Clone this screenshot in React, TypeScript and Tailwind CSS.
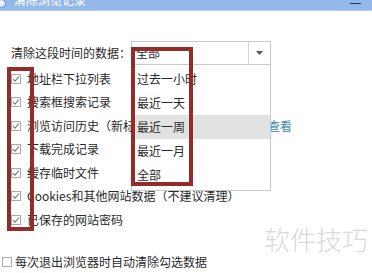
import React from 'react'

const items = [
    '地址栏下拉列表',
    '搜索框搜索记录',
    '浏览访问历史（新标签页）',
    '下载完成记录',
    '缓存临时文件',
    'Cookies和其他网站数据（不建议清理）',
    '已保存的网站密码',
]

const ranges = ['过去一小时', '最近一天', '最近一周', '最近一月', '全部']

function Box({ checked }: { checked: boolean }) {
    return (
        <span className="flex h-[10px] w-[10px] shrink-0 items-center justify-center border border-[#a9a9a9] bg-white">
            {checked && (
                <svg width="8" height="8" viewBox="0 0 8 8" fill="none">
                    <path d="M1 4.2 L3 6.2 L7 1.5" stroke="#6d7a86" strokeWidth="1.1" />
                </svg>
            )}
        </span>
    )
}

export default function App() {
    return (
        <div
            className="relative h-[273px] w-[372px] overflow-hidden bg-white text-[12px] leading-none text-[#2a2a2a]"
            style={{ fontFamily: '"Noto Sans CJK SC", "Noto Sans", sans-serif' }}
        >
            {/* title bar, cut off at the top */}
            <div className="relative flex h-[11px] items-start overflow-hidden border-b border-[#b7cde8] bg-[#93b9eb]">
                <span className="ml-[-3px] mt-[-1px] h-[9px] w-[9px] shrink-0 rounded-full border border-[#5e8fcf] bg-[#e9f2ff]" />
                <span className="ml-[8px] mt-[-6px] whitespace-nowrap text-[12px] leading-[12px] text-white">清除浏览记录</span>
                <span className="absolute right-[11px] top-[3px] h-[1px] w-[11px] bg-[#1f3657]" />
            </div>

            {/* time range row */}
            <div className="mt-[30px] flex items-center pl-[11px]">
                <span className="w-[120px]">清除这段时间的数据：</span>
                <div className="relative flex h-[24px] w-[140px] items-center border border-[#c9c9c9]">
                    <span className="flex-1 pl-[4px]">全部</span>
                    <span className="flex h-full w-[22px] items-center justify-center border-l border-[#d4d4d4]">
                        <svg width="7" height="4" viewBox="0 0 7 4">
                            <path d="M0 0 H7 L3.5 4 Z" fill="#555" />
                        </svg>
                    </span>
                    {/* open list */}
                    <div className="absolute left-[-1px] top-[22px] z-10 flex w-[140px] flex-col border border-[#c9c9c9] bg-white pt-[2px] pb-[3px]">
                        {ranges.map((r, i) => (
                            <div
                                key={r}
                                className={`flex h-[24px] items-center pl-[5px] ${i === 2 ? 'bg-[#e2e2e2]' : ''}`}
                            >
                                {r}
                            </div>
                        ))}
                    </div>
                </div>
            </div>

            {/* checkbox list */}
            <div className="mt-[2px] flex flex-col">
                {items.map((t, i) => (
                    <div key={t} className="flex h-[23.5px] items-center gap-[6px] pl-[11px]">
                        <Box checked />
                        <span className={`whitespace-nowrap ${i === 2 ? 'w-[235px] overflow-hidden' : ''}`}>{t}</span>
                        {i === 2 && <span className="text-[#3b87ad]">查看</span>}
                    </div>
                ))}
            </div>

            {/* auto clear */}
            <div className="mt-[24px] flex items-center gap-[3px] pl-[2px]">
                <Box checked={false} />
                <span>每次退出浏览器时自动清除勾选数据</span>
            </div>

            {/* annotation boxes */}
            <div className="absolute left-[7px] top-[67px] z-20 h-[164px] w-[27px] border-[4px] border-[#942c2c]" />
            <div className="absolute left-[131px] top-[47px] z-20 h-[139px] w-[62px] border-[4px] border-[#942c2c]" />

            {/* watermark */}
            <span className="absolute left-[264px] top-[226px] text-[26px] font-light leading-none text-[#d9d9d9]">
                软件技巧
            </span>
        </div>
    )
}
